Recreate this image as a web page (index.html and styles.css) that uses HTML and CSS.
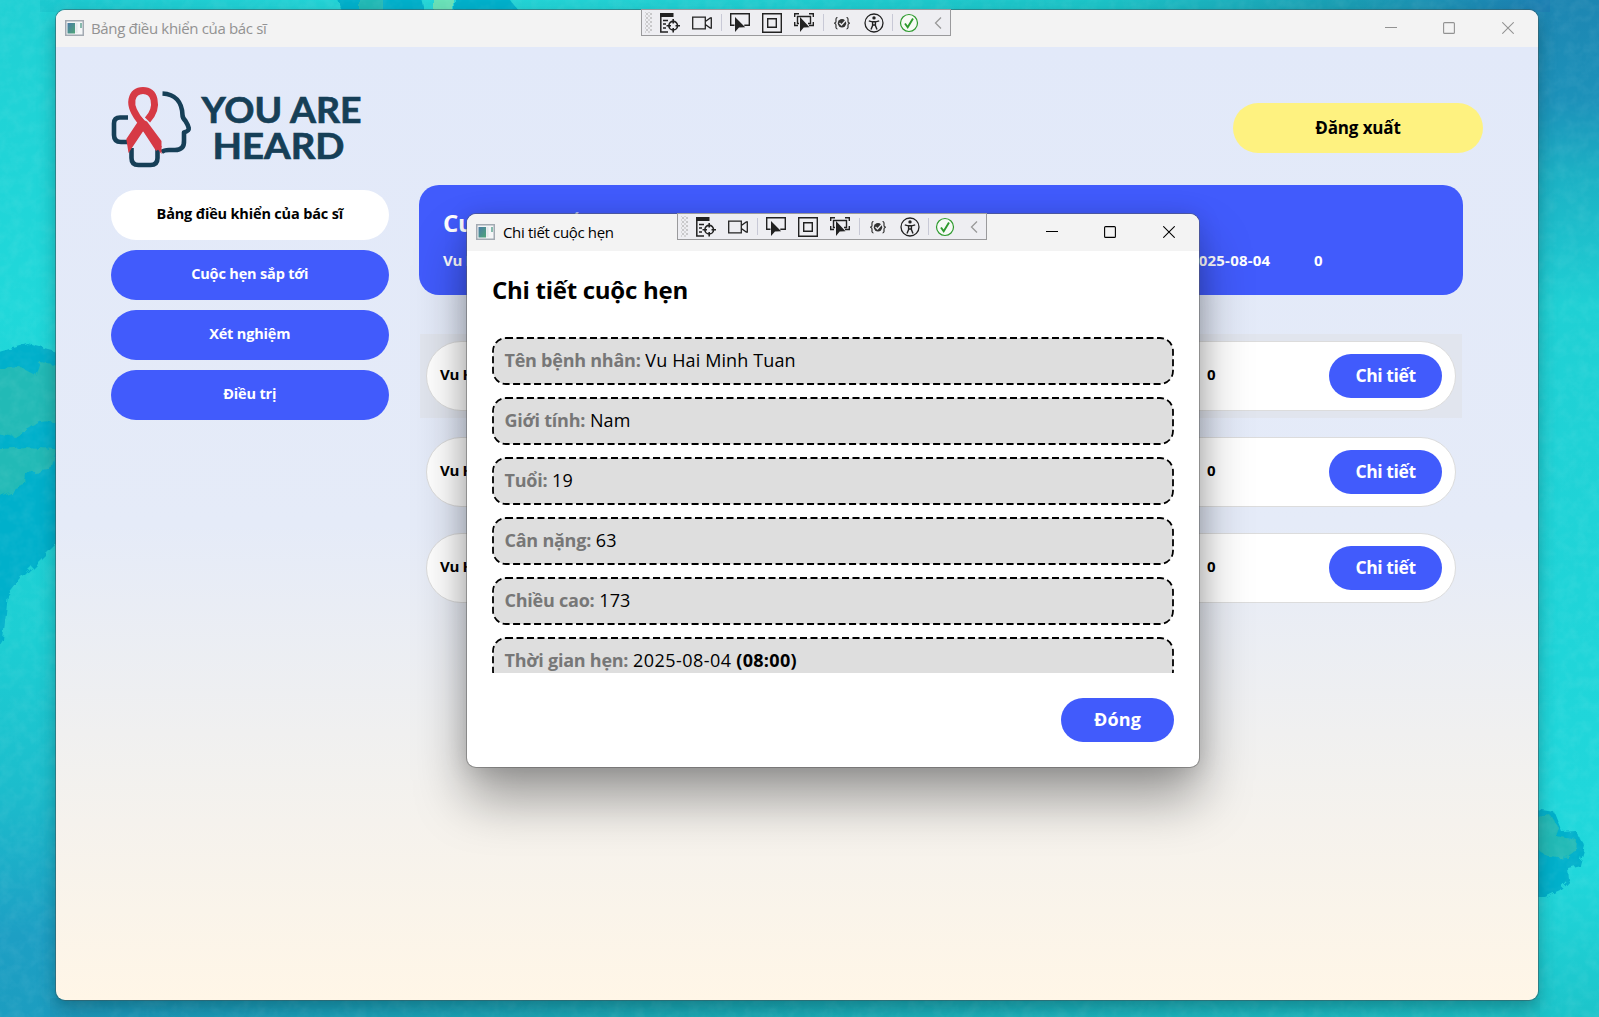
FILE: index.html
```html
<!DOCTYPE html>
<html lang="vi">
<head>
<meta charset="utf-8">
<title>Bảng điều khiển của bác sĩ</title>
<link rel="stylesheet" href="styles.css">
</head>
<body>
<svg width="0" height="0" class="defs" aria-hidden="true">
  <symbol id="i-app" viewBox="0 0 19 16"><rect x=".75" y=".75" width="17.5" height="14.5" fill="#f4f6f7" stroke="#a3aab2" stroke-width="1.5"/><rect x="2.5" y="3" width="7.5" height="10.5" fill="url(#appfill)"/><path d="M11.5 3v10" stroke="#e4e7ea" stroke-width="2"/><path d="M16 3v5" stroke="#4d9a86" stroke-width="1.3"/></symbol>
  <linearGradient id="appfill" x1="0" y1="0" x2="1" y2="1"><stop offset="0" stop-color="#4a7ba6"/><stop offset="1" stop-color="#4fa578"/></linearGradient>
  <symbol id="i-tree" viewBox="0 0 20 20"><path d="M0 0h13.5v4H0z" fill="#222"/><path d="M.8 3v16H8M3 7.500h5M3 11h3M3 15h3" fill="none" stroke="#222" stroke-width="1.5"/><circle cx="13.200" cy="12.700" r="4.300" fill="none" stroke="#222" stroke-width="1.600"/><path d="M13.200 6v4.500M13.200 15v4.500M6.500 12.700h4.500M15.500 12.700H20" stroke="#222" stroke-width="1.600"/></symbol>
  <symbol id="i-cam" viewBox="0 0 20 20"><path d="M.7 4.200h12.600v11.600H.7zM13.300 8.500l5-3.500h1v10h-1l-5-3.500" fill="none" stroke="#222" stroke-width="1.300"/></symbol>
  <symbol id="i-pick" viewBox="0 0 20 20"><path d="M4.500 12.300H.7V.7h18.600v11.600h-5" fill="none" stroke="#222" stroke-width="1.400"/><path d="M5 4v15l4-4.500 6.200-.2z" fill="#222"/></symbol>
  <symbol id="i-box" viewBox="0 0 20 20"><path d="M.7.7h18.600v18.600H.7zM5.700 5.700h8.600v8.600H5.700z" fill="none" stroke="#222" stroke-width="1.400"/></symbol>
  <symbol id="i-track" viewBox="0 0 20 20"><path d="M.7 4V.7H5M15 .7h4.300V4M.7 9v3.500H4M19.300 9v3.500H15M5 10.500H3.500v-7h13v7H14" fill="none" stroke="#222" stroke-width="1.400"/><path d="M6 4v15l3.700-4.500 5.800-.2z" fill="#222"/></symbol>
  <symbol id="i-bind" viewBox="0 0 20 20"><path d="M5.500 4.500C3.500 4.500 4 7 4 8.500S3.200 10 2.200 10.200C3.200 10.400 4 10.500 4 12s-.5 4 1.500 4M14.500 4.500c2 0 1.500 2.500 1.500 4s.8 1.500 1.800 1.700c-1 .2-1.800.3-1.800 1.800s.5 4-1.500 4" fill="none" stroke="#333" stroke-width="1.200"/><circle cx="10" cy="10.200" r="4.200" fill="#333"/><path d="M7.500 10l2 2 4.500-5" fill="none" stroke="#eeeef2" stroke-width="1.300"/></symbol>
  <symbol id="i-acc" viewBox="0 0 20 20"><circle cx="10" cy="10" r="9" fill="none" stroke="#222" stroke-width="1.300"/><circle cx="10" cy="4.900" r="1.700" fill="#222"/><path d="M4.800 7.800l3.500 1h3.400l3.500-1M8.600 9v3.500L7 16.500M11.400 9v3.500l1.600 4M8.600 12h2.800" fill="none" stroke="#222" stroke-width="1.400"/></symbol>
  <symbol id="i-ok" viewBox="0 0 20 20"><circle cx="10" cy="10" r="8.500" fill="#f6faf5" stroke="#2d9a2d" stroke-width="1.200"/><path d="M6 10.500l2.700 3.700L14 5.500" fill="none" stroke="#2d9a2d" stroke-width="1.900"/></symbol>
  <symbol id="i-chev" viewBox="0 0 20 20"><path d="M13 4.500L7.500 10l5.500 5.500" fill="none" stroke="#999" stroke-width="1.300"/></symbol>
  <symbol id="i-min" viewBox="0 0 12 12"><path d="M0 5.500h12" stroke="currentColor"/></symbol>
  <symbol id="i-max" viewBox="0 0 12 12"><rect x=".6" y=".6" width="10.800" height="10.800" rx="1" fill="none" stroke="currentColor" stroke-width="1.100"/></symbol>
  <symbol id="i-close" viewBox="0 0 12 12"><path d="M.3.3l11.400 11.400M11.700.3L.3 11.700" stroke="currentColor" stroke-width="1.050"/></symbol>
  <symbol id="frame"><rect x="1" y="1" width="680" height="46" rx="13" fill="#dedede" stroke="#000" stroke-width="1.800" stroke-dasharray="7 3.500"/></symbol>
</svg>

<svg class="wallpaper" viewBox="0 0 1599 1017" aria-hidden="true">
  <defs>
    <linearGradient id="wl" x1="0" y1="0" x2="0" y2="1"><stop offset="0" stop-color="#20d0d4"/><stop offset=".3" stop-color="#20d8da"/><stop offset=".63" stop-color="#1dced3"/><stop offset=".78" stop-color="#1cbccc"/><stop offset=".92" stop-color="#1d9fc4"/><stop offset="1" stop-color="#1c9dc0"/></linearGradient>
    <linearGradient id="wr" x1="0" y1="0" x2="0" y2="1"><stop offset="0" stop-color="#1d86b2"/><stop offset=".1" stop-color="#1c92ba"/><stop offset=".17" stop-color="#1cb0c4"/><stop offset=".3" stop-color="#1fd0d4"/><stop offset=".85" stop-color="#20d8dc"/><stop offset="1" stop-color="#1cc4ca"/></linearGradient>
    <linearGradient id="wt"><stop offset="0" stop-color="#1cc8cf"/><stop offset=".25" stop-color="#24d6d8"/><stop offset=".7" stop-color="#1cc4c8"/><stop offset=".86" stop-color="#1a9fb4"/><stop offset="1" stop-color="#1d7fb2"/></linearGradient>
    <linearGradient id="wb"><stop offset="0" stop-color="#1c97bb"/><stop offset=".4" stop-color="#1aa8b4"/><stop offset="1" stop-color="#1dbfc5"/></linearGradient>
    <filter id="grain"><feTurbulence type="fractalNoise" baseFrequency=".09" numOctaves="3"/><feColorMatrix values="0 0 0 0 1  0 0 0 0 1  0 0 0 0 1  .6 0 0 0 -.22"/></filter>
    <filter id="rough"><feTurbulence type="fractalNoise" baseFrequency=".12" numOctaves="2"/><feDisplacementMap in="SourceGraphic" scale="8"/></filter>
  </defs>
  <rect width="800" height="1017" fill="url(#wl)"/>
  <rect x="800" width="799" height="1017" fill="url(#wr)"/>
  <rect x="40" width="1510" height="12" fill="url(#wt)"/>
  <rect x="50" y="998" width="1490" height="19" fill="url(#wb)"/>
  <g filter="url(#rough)">
    <path d="M-9 354L28 344l32 8v188l-40 40-12 15-5 45-12 20zM1530 808l24 4 8 20 14-1 9 15-5 19-12 3 1 12-9 10-15 7h-15zM335-6h85l5 20h-82zM455-6h50l15 18h-65z" fill="#00b0cb"/>
    <path d="M-9 370l29-3 15 8 5-13 20 3v55l-20 2-25 15-24-5zM-9 450l34-3 30 2-5 21-25 3-1 12-14 7-19 8zM1530 818l20-3 9 13-3 8 21 4-1 12-8 6-20-2-18-11zM360-6h23v20h-23z" fill="#20bab6"/>
    <path d="M434-6h19v20h-19z" fill="#6be2b8"/>
  </g>
  <rect width="1599" height="1017" filter="url(#grain)" opacity=".2"/>
</svg>

<main class="window main-window">
  <header class="titlebar inactive">
    <svg class="app-icon"><use href="#i-app"/></svg>
    <span class="caption">Bảng điều khiển của bác sĩ</span>
    <div class="controls"><svg><use href="#i-min"/></svg><svg><use href="#i-max"/></svg><svg><use href="#i-close"/></svg></div>
  </header>
  <div class="debugbar"><i class="grip"></i><svg><use href="#i-tree"/></svg><svg><use href="#i-cam"/></svg><i class="sep"></i><svg><use href="#i-pick"/></svg><svg><use href="#i-box"/></svg><svg><use href="#i-track"/></svg><i class="sep"></i><svg><use href="#i-bind"/></svg><svg><use href="#i-acc"/></svg><i class="sep last"></i><svg><use href="#i-ok"/></svg><svg><use href="#i-chev"/></svg></div>

  <div class="content">
    <div class="topline">
      <svg class="logo" viewBox="0 0 252 84" role="img" aria-label="You are heard">
        <g fill="none" stroke="#163f57" stroke-width="4.600" stroke-linejoin="round">
          <path d="M17 32.500H9q-6 0-6 6V50q0 7 7 7h7"/>
          <path d="M20.500 63v10q0 7 7 7h12q7 0 7-7V63"/>
          <path d="M51.500 8.500C64 9 71 17 71.500 30q0 3 3 6 2.500 4 3.200 7 .5 3-4.700 4.500v8q.5 9.500-9 9.500h-6q-5 0-7.500 2" />
        </g>
        <path d="M36.500 35C43 28 44.500 21 43 14.500 41.500 8 37 5.500 32 5.500S22.500 8 21 14.500C19.500 22 24 30 31 38l17 26" fill="none" stroke="#d63a45" stroke-width="7"/>
        <path d="M30 32l7 7L17.500 68 15.300 54zM28 33l8 3.500L50.500 56v13L31.500 45z" fill="#d63a45"/>
        <g fill="#163f57" stroke="#163f57" stroke-width=".7" font-family="Lato, sans-serif" font-weight="700" font-size="36.500">
          <text x="90.500" y="37.500" textLength="160" lengthAdjust="spacingAndGlyphs">YOU ARE</text>
          <text x="101.500" y="73.500" textLength="132" lengthAdjust="spacingAndGlyphs">HEARD</text>
        </g>
      </svg>
      <button class="pill logout">Đăng xuất</button>
    </div>
    <div class="columns">
      <nav class="sidebar">
        <button class="pill nav current">Bảng điều khiển của bác sĩ</button>
        <button class="pill nav">Cuộc hẹn sắp tới</button>
        <button class="pill nav">Xét nghiệm</button>
        <button class="pill nav">Điều trị</button>
      </nav>
      <section class="board">
        <div class="banner">
          <h2>Cuộc hẹn sắp tới</h2>
          <div class="banner-row"><span>Vu Hai Minh Tuan</span><span class="date">2025-08-04</span><span>0</span></div>
        </div>
        <div class="list">
          <div class="item hovered"><div class="card"><span>Vu Hai Minh Tuan</span><span>0</span><button class="pill small">Chi tiết</button></div></div>
          <div class="item"><div class="card"><span>Vu Hai Minh Tuan</span><span>0</span><button class="pill small">Chi tiết</button></div></div>
          <div class="item"><div class="card"><span>Vu Hai Minh Tuan</span><span>0</span><button class="pill small">Chi tiết</button></div></div>
        </div>
      </section>
    </div>
  </div>
</main>

<div class="window dialog" role="dialog">
  <header class="titlebar">
    <svg class="app-icon"><use href="#i-app"/></svg>
    <span class="caption">Chi tiết cuộc hẹn</span>
    <div class="controls"><svg><use href="#i-min"/></svg><svg><use href="#i-max"/></svg><svg><use href="#i-close"/></svg></div>
  </header>
  <div class="debugbar"><i class="grip"></i><svg><use href="#i-tree"/></svg><svg><use href="#i-cam"/></svg><i class="sep"></i><svg><use href="#i-pick"/></svg><svg><use href="#i-box"/></svg><svg><use href="#i-track"/></svg><i class="sep"></i><svg><use href="#i-bind"/></svg><svg><use href="#i-acc"/></svg><i class="sep last"></i><svg><use href="#i-ok"/></svg><svg><use href="#i-chev"/></svg></div>
  <div class="details">
    <h1>Chi tiết cuộc hẹn</h1>
    <div class="fields">
      <div class="field"><svg><use href="#frame"/></svg><p><b>Tên bệnh nhân:</b> Vu Hai Minh Tuan</p></div>
      <div class="field"><svg><use href="#frame"/></svg><p><b>Giới tính:</b> Nam</p></div>
      <div class="field"><svg><use href="#frame"/></svg><p><b>Tuổi:</b> 19</p></div>
      <div class="field"><svg><use href="#frame"/></svg><p><b>Cân nặng:</b> 63</p></div>
      <div class="field"><svg><use href="#frame"/></svg><p><b>Chiều cao:</b> 173</p></div>
      <div class="field"><svg><use href="#frame"/></svg><p><b>Thời gian hẹn:</b> <span class="when">2025-08-04</span> <strong>(08:00)</strong></p></div>
    </div>
    <button class="pill small close">Đóng</button>
  </div>
</div>
</body>
</html>
```
FILE: styles.css
```css
* { box-sizing: border-box; margin: 0; padding: 0; }
body { width: 1599px; height: 1017px; overflow: hidden; position: relative; background: #1dced3; font-family: "Open Sans", "Noto Sans", sans-serif; color: #000; }
.defs { position: absolute; }
.wallpaper { position: absolute; inset: 0; width: 1599px; height: 1017px; }
button { border: 0; font: inherit; }

/* Desktop windows */
.window { position: absolute; border-radius: 9px; display: flex; flex-direction: column; }
.main-window { left: 56px; top: 10px; width: 1482px; height: 990px; box-shadow: 0 0 0 1px rgba(60, 90, 95, .55), 0 8px 18px rgba(0, 40, 50, .35); background: linear-gradient(#e2e9f9 37px, #e5ebf8 52%, #f0f0f0 73%, #fff6e7); }
.dialog { left: 467px; top: 214px; width: 732px; height: 553px; background: #fff; box-shadow: 0 0 0 1px rgba(90, 90, 90, .5), 0 32px 52px rgba(0, 0, 0, .36), 0 2px 24px rgba(0, 0, 0, .14); }

.titlebar { height: 37px; flex: none; background: #f3f3f3; border-radius: 9px 9px 0 0; display: flex; align-items: center; padding: 0 24px 1px 9px; font-size: 15px; letter-spacing: -.34px; }
.inactive { color: #929292; }
.app-icon { width: 19px; height: 16px; margin-right: 7px; }
.dialog .app-icon { margin-right: 8px; }
.caption { flex: none; }
.controls { margin-left: auto; display: flex; gap: 47px; }
.controls svg { width: 12px; height: 12px; }
.controls svg:first-child { margin-right: -1px; }

/* Docked diagnostics toolbar */
.debugbar { position: absolute; left: 585px; top: -1px; width: 310px; height: 27px; background: #eeeef2; border: 1px solid #9a9a9c; display: flex; align-items: center; padding-left: 3px; overflow: hidden; }
.dialog .debugbar { left: 210px; }
.debugbar svg { width: 20px; height: 20px; margin-right: 12px; flex: none; }
.debugbar svg:last-child { margin-left: -3px; }
.grip { width: 7px; height: 21px; margin-right: 8px; flex: none; background: radial-gradient(circle, #bbb 0 .6px, transparent 1px) 0 0 / 4px 4px, radial-gradient(circle, #ccc 0 .6px, transparent 1px) 2px 2px / 4px 4px; }
.sep { width: 1px; height: 17px; background: #c8c9d6; margin: 0 8px 0 -3px; flex: none; }
.sep.last { margin: 0 6px 0 -4px; }

/* Main window */
.content { flex: 1; padding: 38px 55px 0; }
.topline { display: flex; justify-content: space-between; align-items: flex-start; height: 100px; }
.logo { width: 252px; height: 84px; }
.pill { background: #415bfc; color: #fff; display: flex; align-items: center; justify-content: center; font-weight: 700; white-space: nowrap; padding-bottom: 2px; }
.logout { width: 250px; height: 50px; margin-top: 18px; border-radius: 25px; background: #fef280; color: #000; font-size: 17px; letter-spacing: -.13px; }
.columns { display: flex; gap: 30.500px; }
.sidebar { width: 277.500px; display: flex; flex-direction: column; gap: 10px; padding-top: 4.500px; }
.nav { height: 50px; border-radius: 25px; font-size: 14.500px; letter-spacing: -.17px; }
.current { background: #fff; color: #000; }
.board { width: 1044px; font-weight: 700; font-size: 15px; letter-spacing: -.3px; }
.banner { height: 110px; border-radius: 20px; background: #415bfc; color: #fff; padding: 20px 24px; }
.banner h2 { font-size: 24px; font-weight: 700; line-height: 36px; letter-spacing: -.28px; }
.banner-row { display: grid; grid-template-columns: 747px 124px 1fr; line-height: 20px; margin-top: 9px; }
.date { letter-spacing: .2px; }
.list { padding: 39px 1px 0 1px; display: flex; flex-direction: column; gap: 12px; }
.item { height: 84px; padding: 7px 6px; }
.hovered { background: #e1e5ee; }
.card { height: 70px; border: 1px solid #dcdcdc; border-radius: 35px; background: #fff; display: grid; grid-template-columns: 767px 122px 113px; align-items: center; padding-left: 13px; }
.card > span { padding-bottom: 5px; }
.small { width: 113px; height: 44px; border-radius: 22px; font-size: 17.500px; letter-spacing: -.4px; }

/* Appointment dialog */
.details { padding: 21px 25px 25px; display: flex; flex-direction: column; flex: 1; }
h1 { font-size: 24px; font-weight: 700; line-height: 36px; white-space: nowrap; letter-spacing: -.27px; }
.fields { height: 336px; margin-top: 29px; overflow: hidden; display: grid; grid-auto-rows: 48px; row-gap: 12px; }
.field { display: grid; font-size: 18px; }
.field > * { grid-area: 1 / 1; }
.field svg { width: 682px; height: 48px; }
.field p { padding: 0 12.500px; line-height: 46px; position: relative; white-space: nowrap; letter-spacing: .12px; }
.field b { font-weight: 700; color: #777; letter-spacing: -.24px; }
.field .when { letter-spacing: .45px; }
.field strong { font-weight: 700; letter-spacing: .3px; }
.close { align-self: flex-end; margin-top: 25px; font-size: 18px; letter-spacing: .1px; }
```
